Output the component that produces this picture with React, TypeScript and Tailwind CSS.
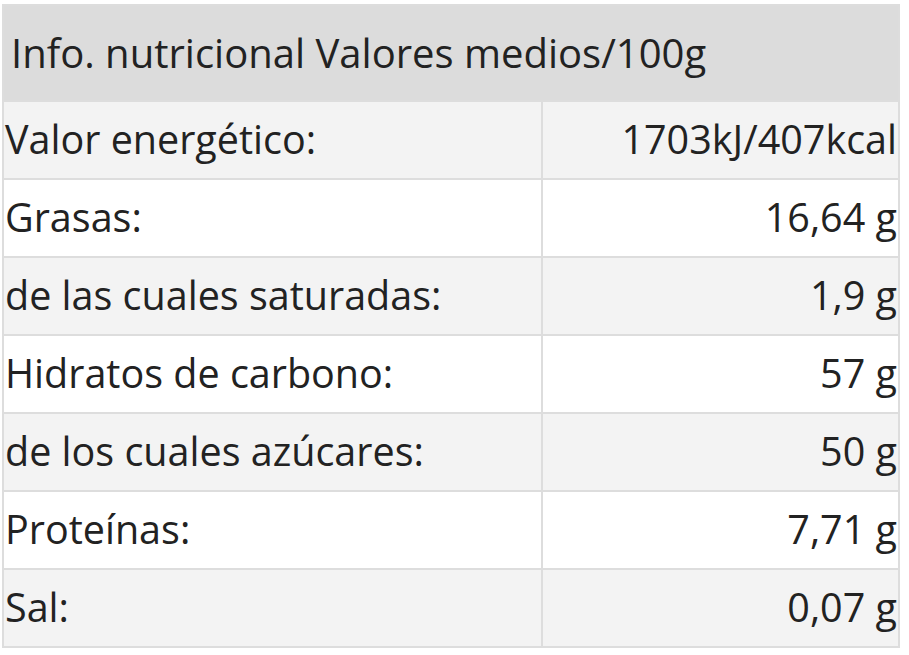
const rows: [string, string][] = [
  ['Valor energético:', '1703kJ/407kcal'],
  ['Grasas:', '16,64 g'],
  ['de las cuales saturadas:', '1,9 g'],
  ['Hidratos de carbono:', '57 g'],
  ['de los cuales azúcares:', '50 g'],
  ['Proteínas:', '7,71 g'],
  ['Sal:', '0,07 g'],
]

export default function App() {
  return (
    <div className="min-h-screen bg-white pl-[2px] pt-[4px]" style={{ fontFamily: '"Open Sans", sans-serif' }}>
      <div className="w-[898px] border-2 border-[#dddddd] text-[#222222]">
        <div className="flex h-[94px] items-center bg-[#dcdcdc] px-[7px] text-[40px]">
          Info. nutricional Valores medios/100g
        </div>
        {rows.map(([label, value], i) => (
          <div
            key={label}
            className={`flex h-[78px] border-t-2 border-[#dddddd] text-[39.5px] ${i % 2 === 0 ? 'bg-[#f3f3f3]' : 'bg-white'}`}
          >
            <div className="flex w-[537px] items-center pl-[1px]">{label}</div>
            <div className="flex flex-1 items-center justify-end border-l-2 border-[#dddddd] pr-[1px]">{value}</div>
          </div>
        ))}
      </div>
    </div>
  )
}
